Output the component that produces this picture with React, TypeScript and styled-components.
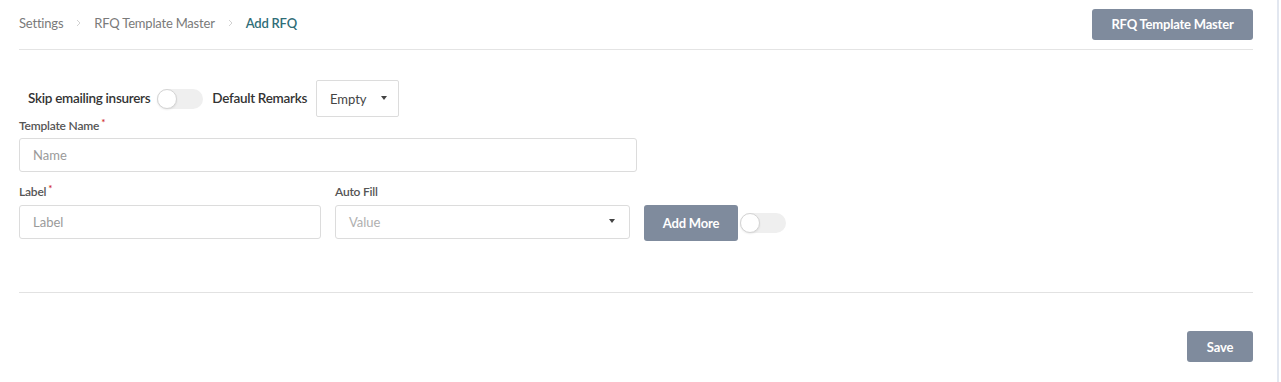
import React from "react"
import styled, { createGlobalStyle } from "styled-components"

const GlobalStyle = createGlobalStyle`
  html, body {
    margin: 0;
    padding: 0;
    background: #ffffff;
    font-family: Lato, "Open Sans", "Liberation Sans", sans-serif;
  }
  * {
    box-sizing: border-box;
  }
`

const BUTTON_BG = "#7f8b9d"

const Page = styled.div`
  width: 1279px;
  height: 382px;
  background: #ffffff;
  border-right: 2px solid #e2e7f0;
`

const Inner = styled.div`
  margin: 0 24px 0 19px;
`

const Header = styled.div`
  display: flex;
  align-items: center;
  justify-content: space-between;
  height: 50px;
  border-bottom: 1px solid #e4e4e4;
  padding-bottom: 1px;
`

const Crumbs = styled.nav`
  display: flex;
  align-items: center;
  gap: 12px;
  font-size: 13px;
  margin-top: -3px;
  letter-spacing: -0.2px;
`

const Crumb = styled.span<{ $active?: boolean }>`
  color: ${(p) => (p.$active ? "#2f6d77" : "#7a7a7a")};
  font-weight: ${(p) => (p.$active ? 600 : 400)};
`

const Chevron = styled.span`
  display: inline-flex;
  color: #d2d2d2;
  margin: 0 1px;
`

const Button = styled.button<{ $w: number; $h: number }>`
  width: ${(p) => p.$w}px;
  height: ${(p) => p.$h}px;
  background: ${BUTTON_BG};
  color: #ffffff;
  border: none;
  border-radius: 3px;
  font-family: inherit;
  font-size: 13px;
  font-weight: 700;
  letter-spacing: -0.2px;
  padding: 0;
  cursor: pointer;
`

const Form = styled.div`
  padding-top: 31px;
`

const OptionsRow = styled.div`
  display: flex;
  align-items: center;
  height: 36px;
  padding-left: 9px;
`

const OptionText = styled.span<{ $gap: number }>`
  font-size: 13.5px;
  font-weight: 600;
  color: #333333;
  margin-right: ${(p) => p.$gap}px;
  letter-spacing: -0.3px;
  margin-top: -2px;
`

const Track = styled.span<{ $gap?: number }>`
  position: relative;
  display: inline-block;
  width: 46px;
  height: 20px;
  border-radius: 10px;
  background: #efefef;
  margin-right: ${(p) => p.$gap ?? 0}px;
  flex-shrink: 0;
`

const Knob = styled.span`
  position: absolute;
  left: 0;
  top: 0;
  width: 20px;
  height: 20px;
  border-radius: 50%;
  background: #ffffff;
  border: 1px solid #d4d4d4;
  box-shadow: 0 1px 2px rgba(0, 0, 0, 0.08);
`

const RemarksSelect = styled.div`
  display: flex;
  align-items: center;
  justify-content: space-between;
  width: 83px;
  height: 37px;
  margin-top: -1px;
  border: 1px solid #dcdcdc;
  border-radius: 2px;
  padding: 0 11px 0 13px;
  font-size: 13px;
  color: #444444;
`

const Caret = styled.span`
  width: 0;
  height: 0;
  border-left: 3px solid transparent;
  border-right: 3px solid transparent;
  border-top: 4px solid #444444;
  margin-top: -2px;
`

const FieldLabel = styled.div<{ $top: number; $bottom: number }>`
  font-size: 12px;
  font-weight: 600;
  color: #555555;
  line-height: 16px;
  margin-top: ${(p) => p.$top}px;
  margin-bottom: ${(p) => p.$bottom}px;
  letter-spacing: -0.2px;
`

const Required = styled.sup`
  color: #d0302c;
  font-size: 10px;
  margin-left: 2px;
  vertical-align: 4px;
  line-height: 0;
`

const TextInput = styled.input<{ $w: number }>`
  width: ${(p) => p.$w}px;
  height: 34px;
  border: 1px solid #dcdcdc;
  border-radius: 3px;
  padding: 0 13px;
  font-family: inherit;
  font-size: 13px;
  color: #444444;
  outline: none;
  &::placeholder {
    color: #9a9a9a;
  }
`

const FieldsRow = styled.div`
  display: flex;
  align-items: flex-end;
  gap: 14px;
`

const Field = styled.div`
  display: flex;
  flex-direction: column;
`

const ValueSelect = styled.div`
  display: flex;
  align-items: center;
  justify-content: space-between;
  width: 295px;
  height: 34px;
  border: 1px solid #dcdcdc;
  border-radius: 3px;
  padding: 0 14px 0 13px;
  font-size: 13px;
  color: #b0b0b0;
`

const Actions = styled.div`
  display: flex;
  align-items: center;
  gap: 2px;
  margin-bottom: -2px;
`

const Divider = styled.div`
  height: 1px;
  background: #e2e2e2;
  margin-top: 53px;
`

const Footer = styled.div`
  display: flex;
  justify-content: flex-end;
  padding-top: 38px;
`

const Toggle = ({ gap }: { gap?: number }) => (
  <Track $gap={gap}>
    <Knob />
  </Track>
)

const ChevronIcon = () => (
  <Chevron>
    <svg width="5" height="8" viewBox="0 0 5 8">
      <path d="M1 1l3 3-3 3" fill="none" stroke="currentColor" strokeWidth="1" />
    </svg>
  </Chevron>
)

const App = () => {
  return (
    <>
      <GlobalStyle />
      <Page>
        <Inner>
          <Header>
            <Crumbs>
              <Crumb>Settings</Crumb>
              <ChevronIcon />
              <Crumb>RFQ Template Master</Crumb>
              <ChevronIcon />
              <Crumb $active>Add RFQ</Crumb>
            </Crumbs>
            <Button $w={161} $h={31}>RFQ Template Master</Button>
          </Header>

          <Form>
            <OptionsRow>
              <OptionText $gap={7}>Skip emailing insurers</OptionText>
              <Toggle gap={9} />
              <OptionText $gap={9}>Default Remarks</OptionText>
              <RemarksSelect>
                <span>Empty</span>
                <Caret />
              </RemarksSelect>
            </OptionsRow>

            <FieldLabel $top={1} $bottom={4}>
              Template Name<Required>*</Required>
            </FieldLabel>
            <TextInput $w={618} placeholder="Name" />

            <FieldsRow>
              <Field>
                <FieldLabel $top={12} $bottom={5}>
                  Label<Required>*</Required>
                </FieldLabel>
                <TextInput $w={302} placeholder="Label" />
              </Field>
              <Field>
                <FieldLabel $top={12} $bottom={5}>Auto Fill</FieldLabel>
                <ValueSelect>
                  <span>Value</span>
                  <Caret />
                </ValueSelect>
              </Field>
              <Actions>
                <Button $w={94} $h={36}>Add More</Button>
                <Toggle />
              </Actions>
            </FieldsRow>
          </Form>

          <Divider />

          <Footer>
            <Button $w={66} $h={31}>Save</Button>
          </Footer>
        </Inner>
      </Page>
    </>
  )
}

export default App
